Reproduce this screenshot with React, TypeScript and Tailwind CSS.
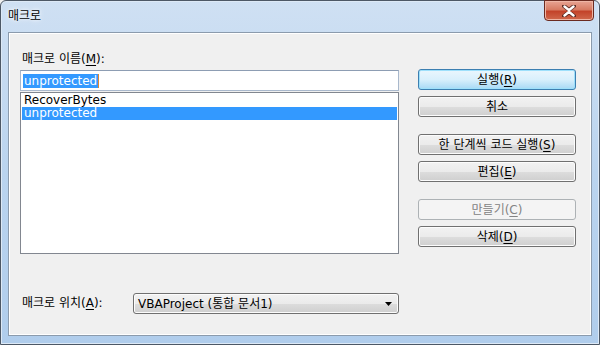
import React from 'react';

const font = { fontFamily: '"DejaVu Sans", "Noto Sans CJK KR", sans-serif' };

type BtnProps = { label: string; mn?: string; rest?: string; kind?: 'default' | 'normal' | 'disabled'; className?: string };

const WinButton: React.FC<BtnProps> = ({ label, mn, rest, kind = 'normal', className = '' }) => {
  const base = 'h-[21px] w-[158px] rounded-[3px] border flex items-center justify-center text-[12px] leading-none';
  const look =
    kind === 'default'
      ? 'border-[#3c7fb1] bg-gradient-to-b from-[#eaf6fd] via-[#d9f0fc] to-[#a7d9f5] text-black shadow-[inset_0_0_0_1px_#9ee0fb]'
      : kind === 'disabled'
      ? 'border-[#adb2b5] bg-[#f4f4f4] text-[#838383]'
      : 'border-[#707070] bg-[linear-gradient(to_bottom,#f2f2f2_0%,#ebebeb_50%,#dddddd_51%,#cfcfcf_100%)] text-black shadow-[inset_0_0_0_1px_#fcfcfc]';
  return (
    <div className={`${base} ${look} ${className}`}>
      <span>
        {label}
        {mn && (
          <>
            (<span className="underline underline-offset-2">{mn}</span>){rest}
          </>
        )}
      </span>
    </div>
  );
};

export default function App() {
  return (
    <div
      className="relative w-[600px] h-[345px] overflow-hidden bg-[#f0f0f0] text-black"
      style={font}
    >
      <div className="w-[600px] h-[345px] flex flex-col rounded-t-[6px] border border-[#4d5866] bg-gradient-to-b from-[#cfe0f3] via-[#bad4ef] to-[#b0cdec] shadow-[inset_0_0_0_1px_#dde9f6]">
        {/* title bar */}
        <div className="relative h-[31px] flex items-start">
          <div className="pl-[7px] pt-[8px] text-[12px] leading-[14px] text-black [text-shadow:0_0_6px_#ffffff,0_0_3px_#ffffff]">
            매크로
          </div>
          <div className="absolute right-[5px] top-[-1px] w-[50px] h-[21px] rounded-b-[4px] border border-[#6b2a20] bg-[linear-gradient(to_bottom,#e8a493_0%,#d77b63_45%,#c3432a_55%,#d0684c_100%)] shadow-[inset_0_0_0_1px_#eeb5a5] flex items-center justify-center">
            <svg width="14" height="12" viewBox="0 0 14 12">
              <path d="M2 1 L7 5 L12 1 M2 11 L7 7 L12 11" stroke="#5a2a22" strokeWidth="4" fill="none" strokeLinecap="round" />
              <path d="M2.5 1.5 L7 5.2 L11.5 1.5 M2.5 10.5 L7 6.8 L11.5 10.5" stroke="#ffffff" strokeWidth="2.4" fill="none" strokeLinecap="round" />
            </svg>
          </div>
        </div>

        {/* client area */}
        <div className="mx-[7px] h-[304px] border border-[#8b9bad] bg-[#f0f0f0] shadow-[inset_0_0_0_1px_#ffffff]">
          <div className="flex pt-[19px] pl-[11px]">
            {/* left column */}
            <div className="w-[379px] flex flex-col">
              <div className="h-[15px] pl-[2px] text-[12px] leading-[15px]">
                매크로 이름(<span className="underline underline-offset-2">M</span>):
              </div>
              <div className="mt-[3px] h-[21px] border border-[#a9b8cc] border-t-[#8d9db3] bg-white flex items-center pl-[2px]">
                <span className="bg-[#3399ff] text-white text-[12px] leading-[14px] px-[1px]">unprotected</span>
                <span className="w-[1px] h-[14px] bg-[#e0862f]" />
              </div>
              <div className="mt-[1px] h-[162px] border border-[#828790] bg-white pt-[1px] px-[1px] text-[12px]">
                <div className="h-[13px] leading-[13px] pl-[2px]">RecoverBytes</div>
                <div className="h-[13px] leading-[13px] pl-[2px] bg-[#3399ff] text-white">unprotected</div>
              </div>
              <div className="mt-[39px] flex items-center h-[21px]">
                <div className="w-[113px] pl-[2px] text-[12px] leading-[15px]">
                  매크로 위치(<span className="underline underline-offset-2">A</span>):
                </div>
                <div className="w-[266px] h-[21px] rounded-[3px] border border-[#707070] bg-[linear-gradient(to_bottom,#f2f2f2_0%,#ebebeb_50%,#dddddd_51%,#cfcfcf_100%)] shadow-[inset_0_0_0_1px_#fcfcfc] flex items-center pl-[4px] pr-[6px] text-[12px]">
                  <span className="flex-1">VBAProject (통합 문서1)</span>
                  <svg width="7" height="4" viewBox="0 0 7 4">
                    <path d="M0 0 H7 L3.5 4 Z" fill="#000000" />
                  </svg>
                </div>
              </div>
            </div>

            {/* right column */}
            <div className="ml-[19px] flex flex-col pt-[17px]">
              <WinButton label="실행" mn="R" kind="default" />
              <WinButton label="취소" className="mt-[6px]" />
              <WinButton label="한 단계씩 코드 실행" mn="S" className="mt-[17px]" />
              <WinButton label="편집" mn="E" className="mt-[6px]" />
              <WinButton label="만들기" mn="C" kind="disabled" className="mt-[17px]" />
              <WinButton label="삭제" mn="D" className="mt-[6px]" />
            </div>
          </div>
        </div>
      </div>
    </div>
  );
}
